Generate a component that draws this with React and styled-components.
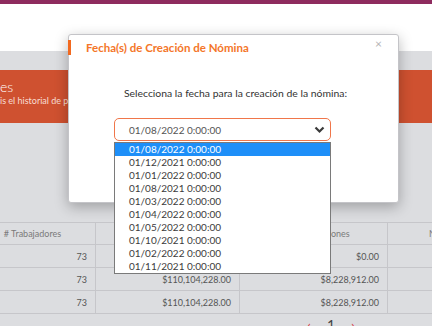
import React from "react";
import styled, { createGlobalStyle } from "styled-components";

const GlobalStyle = createGlobalStyle`
  html, body {
    margin: 0;
    padding: 0;
    overflow: hidden;
    font-family: Lato, "Open Sans", sans-serif;
  }
`;

const Page = styled.div`
  width: 432px;
  height: 326px;
  position: relative;
  overflow: hidden;
  background: #dcdde0;
`;

const TopBar = styled.div`
  height: 4px;
  background: #8e2b5e;
`;

const Header = styled.div`
  height: 47px;
  background: #fff;
`;

const Main = styled.div`
  width: 722px;
  margin-left: -30px;
  padding-top: 19px;
  display: flex;
  flex-direction: column;
`;

const Banner = styled.div`
  height: 53px;
  background: #cf5130;
  padding: 9px 0 0 30px;
  box-sizing: border-box;
  color: #fff;
  white-space: nowrap;
`;

const BannerTitle = styled.div`
  font-size: 14px;
  font-weight: 300;
  line-height: 16px;
`;

const BannerSub = styled.div`
  font-size: 9px;
  line-height: 12px;
  color: #f8ddd2;
`;

const Table = styled.div`
  margin-top: 99px;
  display: grid;
  grid-template-columns: 126px 144px 148px 134px 1fr;
  border-top: 1px solid #c6c6ca;
`;

const Cell = styled.div`
  height: ${(p) => (p.$head ? "21px" : "22px")};
  border-bottom: 1px solid #c6c6ca;
  border-right: 1px solid #c6c6ca;
  display: flex;
  align-items: center;
  justify-content: ${(p) => (p.$head ? "center" : "flex-end")};
  padding: 0 8px;
  font-size: 9px;
  color: ${(p) => (p.$head ? "#7a7a7a" : "#555")};
  white-space: nowrap;
`;

const Pager = styled.div`
  display: flex;
  justify-content: center;
  gap: 16px;
  padding-top: 3px;
  font-size: 14px;
  line-height: 16px;
`;

const PageArrow = styled.span`
  color: #d6424a;
`;

const PageNum = styled.span`
  color: #444;
`;

const Modal = styled.div`
  position: absolute;
  left: 68px;
  top: 34px;
  width: 331px;
  height: 169px;
  box-sizing: border-box;
  background: #fff;
  border: 1px solid #c4c4c8;
  border-radius: 3px;
  box-shadow: 0 4px 14px rgba(0, 0, 0, 0.28);
`;

const ModalHeader = styled.div`
  margin: 5px 0 0 -1px;
  height: 15px;
  display: flex;
  align-items: center;
  border-left: 3px solid #f2691f;
`;

const ModalTitle = styled.div`
  padding-left: 15px;
  font-size: 11.5px;
  font-weight: 700;
  color: #f47629;
`;

const Close = styled.span`
  margin-left: auto;
  margin-right: 16px;
  margin-top: -8px;
  font-size: 12px;
  color: #b5b5b5;
`;

const ModalBody = styled.div`
  padding-top: 32px;
  display: flex;
  flex-direction: column;
`;

const Prompt = styled.div`
  text-align: center;
  font-size: 10.4px;
  color: #333;
  padding-left: 4px;
`;

const SelectBox = styled.div`
  position: relative;
  margin: 19px 0 0 45px;
  width: 217px;
  height: 23px;
  box-sizing: border-box;
  border: 1px solid #f0764a;
  border-radius: 5px;
  display: flex;
  align-items: center;
  padding: 0 5px 0 14px;
  font-size: 10px;
  color: #555;
`;

const Chevron = styled.svg`
  margin-left: auto;
`;

const Options = styled.div`
  position: absolute;
  left: -1px;
  top: 23px;
  width: 217px;
  box-sizing: border-box;
  background: #fff;
  border: 1px solid #7a7a7a;
  z-index: 2;
`;

const Option = styled.div`
  height: 13px;
  line-height: 13px;
  padding-left: 14px;
  font-size: 10px;
  color: ${(p) => (p.$active ? "#fff" : "#3c3c3c")};
  background: ${(p) => (p.$active ? "#1e8ff8" : "transparent")};
`;

const dates = [
  "01/08/2022 0:00:00",
  "01/12/2021 0:00:00",
  "01/01/2022 0:00:00",
  "01/08/2021 0:00:00",
  "01/03/2022 0:00:00",
  "01/04/2022 0:00:00",
  "01/05/2022 0:00:00",
  "01/10/2021 0:00:00",
  "01/02/2022 0:00:00",
  "01/11/2021 0:00:00",
];

const rows = [
  ["73", "$110,104,228.00", "$0.00"],
  ["73", "$110,104,228.00", "$8,228,912.00"],
  ["73", "$110,104,228.00", "$8,228,912.00"],
];

export default function App() {
  return (
    <Page>
      <GlobalStyle />
      <TopBar />
      <Header />
      <Main>
        <Banner>
          <BannerTitle>es</BannerTitle>
          <BannerSub>is el historial de pagos de nómina</BannerSub>
        </Banner>
        <Table>
          <Cell $head># Trabajadores</Cell>
          <Cell $head>Total Percepciones</Cell>
          <Cell $head>Total Deducciones</Cell>
          <Cell $head>Neto a Pagar</Cell>
          <Cell $head>Acciones</Cell>
          {rows.map((r, i) => (
            <React.Fragment key={i}>
              <Cell>{r[0]}</Cell>
              <Cell>{r[1]}</Cell>
              <Cell>{r[2]}</Cell>
              <Cell />
              <Cell />
            </React.Fragment>
          ))}
        </Table>
        <Pager>
          <PageArrow>‹</PageArrow>
          <PageNum>1</PageNum>
          <PageArrow>›</PageArrow>
        </Pager>
      </Main>

      <Modal>
        <ModalHeader>
          <ModalTitle>Fecha(s) de Creación de Nómina</ModalTitle>
          <Close>×</Close>
        </ModalHeader>
        <ModalBody>
          <Prompt>Selecciona la fecha para la creación de la nómina:</Prompt>
          <SelectBox>
            01/08/2022 0:00:00
            <Chevron width="11" height="8" viewBox="0 0 11 8">
              <path d="M1.5 1.5 L5.5 5.5 L9.5 1.5" fill="none" stroke="#3a3a3a" strokeWidth="2.2" />
            </Chevron>
            <Options>
              {dates.map((d, i) => (
                <Option key={i} $active={i === 0}>
                  {d}
                </Option>
              ))}
            </Options>
          </SelectBox>
        </ModalBody>
      </Modal>
    </Page>
  );
}
